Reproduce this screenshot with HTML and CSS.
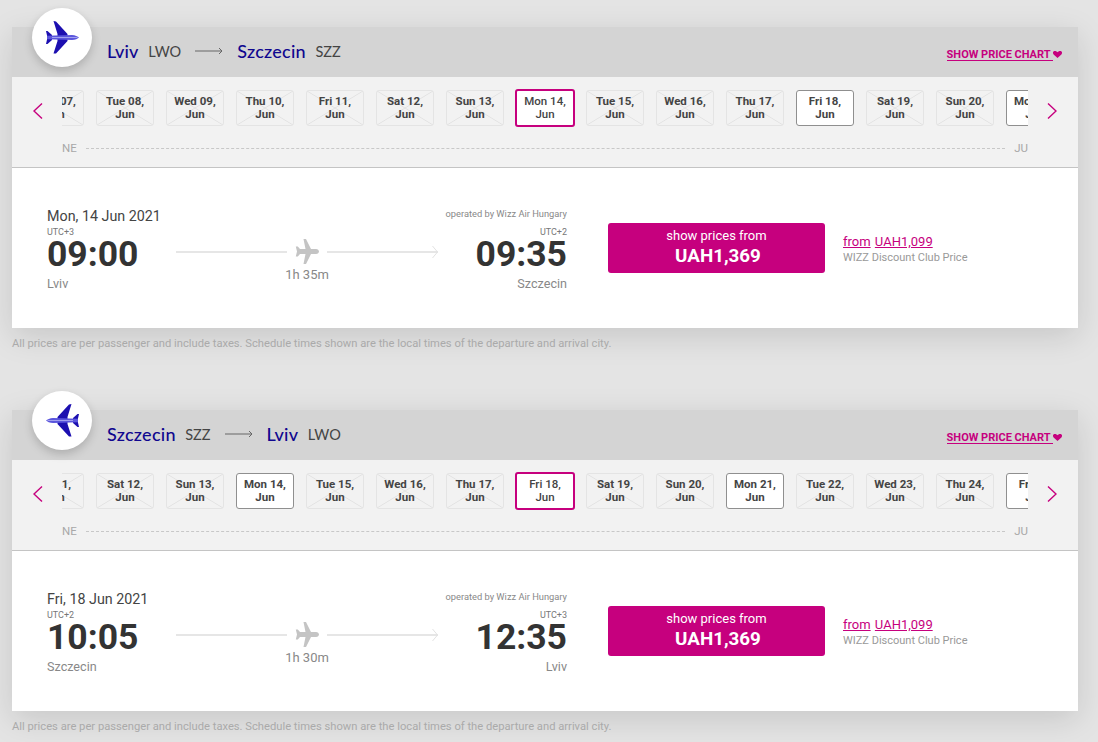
FILE: index.html
```html
<!DOCTYPE html>
<html lang="en">
<head>
<meta charset="utf-8">
<title>Flight selection</title>
<link rel="stylesheet" href="styles.css">
</head>
<body>
<svg class="defs" width="0" height="0" aria-hidden="true">
  <symbol id="jet" viewBox="0 0 33 33">
    <path fill="#1c0fb0" d="M7.500 0 10 .5 21.500 13V20L10 32.500H7.500L11.500 20V13Z"/>
    <path fill="#1c0fb0" d="M0 10H1.500L6 14V19L1.500 23H0L1.500 16.500Z"/>
    <path fill="#5a55dc" d="M1 14.800 26 14C29 14 32 15.500 33 16.500 32 17.500 29 19 26 19L1 18.200Z"/>
    <path fill="#a09eee" d="M6 16H31.500V17H6Z"/>
  </symbol>
  <symbol id="grey-plane" viewBox="0 0 24 25">
    <path fill="#c4c4c4" d="M8.500 0H11L16 10H21C22.800 10 24 11.400 24 12.500 24 13.600 22.800 15 21 15H16L11 25H8.500L10.500 15H5L2.800 17.500H.8L2 12.500 .8 7.500H2.800L5 10H10.500Z"/>
  </symbol>
  <symbol id="heart" viewBox="0 0 9 7">
    <path fill="#c6007e" d="M4.500 7 .6 3.400C-.6 2-.1 0 1.800 0 3 0 4 .6 4.500 1.300 5 .6 6 0 7.200 0 9.100 0 9.600 2 8.400 3.400Z"/>
  </symbol>
</svg>

<section class="flight">
  <header class="flight-head">
    <div class="logo"><svg class="jet" width="33" height="33"><use href="#jet"/></svg></div>
    <div class="route">
      <span class="city">Lviv</span><span class="code">LWO</span>
      <svg class="route-arrow" width="28" height="8" viewBox="0 0 28 8"><path d="M0 4H27M24 1l3 3-3 3" fill="none" stroke="#666" stroke-width="1"/></svg>
      <span class="city">Szczecin</span><span class="code">SZZ</span>
    </div>
    <a class="chart-link" href="#"><span class="chart-text">SHOW PRICE CHART </span><svg class="heart" width="9" height="7"><use href="#heart"/></svg></a>
  </header>
  <div class="dates">
    <svg class="chev" width="10" height="16" viewBox="0 0 10 16"><path d="M9 .5 1 8l8 7.500" fill="none" stroke="#c6007e" stroke-width="1.400"/></svg>
    <div class="date-column">
      <div class="date-clip">
        <div class="date-track">
          <a class="day off">Mon 07,<br>Jun</a><a class="day off">Tue 08,<br>Jun</a><a class="day off">Wed 09,<br>Jun</a><a class="day off">Thu 10,<br>Jun</a><a class="day off">Fri 11,<br>Jun</a><a class="day off">Sat 12,<br>Jun</a><a class="day off">Sun 13,<br>Jun</a><a class="day selected">Mon 14,<br>Jun</a><a class="day off">Tue 15,<br>Jun</a><a class="day off">Wed 16,<br>Jun</a><a class="day off">Thu 17,<br>Jun</a><a class="day open">Fri 18,<br>Jun</a><a class="day off">Sat 19,<br>Jun</a><a class="day off">Sun 20,<br>Jun</a><a class="day open">Mon 21,<br>Jun</a>
        </div>
      </div>
      <div class="months"><span>NE</span><i class="dash"></i><span>JU</span></div>
    </div>
    <svg class="chev" width="10" height="16" viewBox="0 0 10 16"><path d="M1 .5 9 8l-8 7.500" fill="none" stroke="#c6007e" stroke-width="1.400"/></svg>
  </div>
  <div class="details">
    <div class="trip">
      <div class="leg">
        <div class="trip-date">Mon, 14 Jun 2021</div>
        <div class="utc">UTC+3</div>
        <div class="time">09:00</div>
        <div class="place">Lviv</div>
      </div>
      <div class="path">
        <div class="path-line">
          <i class="rule"></i>
          <svg class="grey-plane" width="24" height="25"><use href="#grey-plane"/></svg>
          <i class="rule"></i>
          <svg class="tip" width="6" height="14" viewBox="0 0 6 14"><path d="M.5 1l5 6-5 6" fill="none" stroke="#e2e2e2"/></svg>
        </div>
        <div class="duration">1h 35m</div>
      </div>
      <div class="leg right">
        <div class="operator">operated by Wizz Air Hungary</div>
        <div class="utc">UTC+2</div>
        <div class="time">09:35</div>
        <div class="place">Szczecin</div>
      </div>
    </div>
    <a class="price-btn" href="#"><span class="btn-top">show prices from</span><span class="btn-price">UAH1,369</span></a>
    <div class="club">
      <div class="club-links"><a href="#">from</a> <a href="#">UAH1,099</a></div>
      <div class="club-note">WIZZ Discount Club Price</div>
    </div>
  </div>
</section>
<p class="note">All prices are per passenger and include taxes. Schedule times shown are the local times of the departure and arrival city.</p>

<section class="flight">
  <header class="flight-head">
    <div class="logo"><svg class="jet flip" width="33" height="33"><use href="#jet"/></svg></div>
    <div class="route">
      <span class="city">Szczecin</span><span class="code">SZZ</span>
      <svg class="route-arrow" width="28" height="8" viewBox="0 0 28 8"><path d="M0 4H27M24 1l3 3-3 3" fill="none" stroke="#666" stroke-width="1"/></svg>
      <span class="city">Lviv</span><span class="code">LWO</span>
    </div>
    <a class="chart-link" href="#"><span class="chart-text">SHOW PRICE CHART </span><svg class="heart" width="9" height="7"><use href="#heart"/></svg></a>
  </header>
  <div class="dates">
    <svg class="chev" width="10" height="16" viewBox="0 0 10 16"><path d="M9 .5 1 8l8 7.500" fill="none" stroke="#c6007e" stroke-width="1.400"/></svg>
    <div class="date-column">
      <div class="date-clip">
        <div class="date-track">
          <a class="day off">Fri 11,<br>Jun</a><a class="day off">Sat 12,<br>Jun</a><a class="day off">Sun 13,<br>Jun</a><a class="day open">Mon 14,<br>Jun</a><a class="day off">Tue 15,<br>Jun</a><a class="day off">Wed 16,<br>Jun</a><a class="day off">Thu 17,<br>Jun</a><a class="day selected">Fri 18,<br>Jun</a><a class="day off">Sat 19,<br>Jun</a><a class="day off">Sun 20,<br>Jun</a><a class="day open">Mon 21,<br>Jun</a><a class="day off">Tue 22,<br>Jun</a><a class="day off">Wed 23,<br>Jun</a><a class="day off">Thu 24,<br>Jun</a><a class="day open">Fri 25,<br>Jun</a>
        </div>
      </div>
      <div class="months"><span>NE</span><i class="dash"></i><span>JU</span></div>
    </div>
    <svg class="chev" width="10" height="16" viewBox="0 0 10 16"><path d="M1 .5 9 8l-8 7.500" fill="none" stroke="#c6007e" stroke-width="1.400"/></svg>
  </div>
  <div class="details">
    <div class="trip">
      <div class="leg">
        <div class="trip-date">Fri, 18 Jun 2021</div>
        <div class="utc">UTC+2</div>
        <div class="time">10:05</div>
        <div class="place">Szczecin</div>
      </div>
      <div class="path">
        <div class="path-line">
          <i class="rule"></i>
          <svg class="grey-plane" width="24" height="25"><use href="#grey-plane"/></svg>
          <i class="rule"></i>
          <svg class="tip" width="6" height="14" viewBox="0 0 6 14"><path d="M.5 1l5 6-5 6" fill="none" stroke="#e2e2e2"/></svg>
        </div>
        <div class="duration">1h 30m</div>
      </div>
      <div class="leg right">
        <div class="operator">operated by Wizz Air Hungary</div>
        <div class="utc">UTC+3</div>
        <div class="time">12:35</div>
        <div class="place">Lviv</div>
      </div>
    </div>
    <a class="price-btn" href="#"><span class="btn-top">show prices from</span><span class="btn-price">UAH1,369</span></a>
    <div class="club">
      <div class="club-links"><a href="#">from</a> <a href="#">UAH1,099</a></div>
      <div class="club-note">WIZZ Discount Club Price</div>
    </div>
  </div>
</section>
<p class="note">All prices are per passenger and include taxes. Schedule times shown are the local times of the departure and arrival city.</p>
</body>
</html>
```
FILE: styles.css
```css
* { box-sizing: border-box; }
html, body { height: 100%; }
body {
  margin: 0;
  padding: 27px 20px 0 12px;
  background: #e4e4e4;
  font-family: Roboto, "Noto Sans", sans-serif;
  color: #333;
}
.defs { position: absolute; }
.flight { box-shadow: 0 8px 30px rgba(0, 0, 0, .13); }
.note + .flight { margin-top: 59px; }

.flight-head {
  position: relative;
  display: flex;
  align-items: center;
  justify-content: space-between;
  height: 50px;
  padding: 0 16px 0 95px;
  background: #d4d4d4;
}
.logo {
  position: absolute;
  left: 20px;
  top: -19px;
  width: 60px;
  height: 59px;
  display: flex;
  align-items: center;
  justify-content: center;
  border-radius: 50%;
  background: #fff;
  box-shadow: 0 4px 10px rgba(0, 0, 0, .18);
}
.jet { margin-top: -1px; }
.flip { transform: scaleX(-1); }
.route { display: flex; align-items: center; margin-top: -2px; }
.city { font-family: Lato, sans-serif; font-size: 18px; font-weight: 500; letter-spacing: .25px; color: #10078f; margin-right: 9.500px; }
.code { font-family: Lato, sans-serif; font-size: 14.500px; color: #444; }
.route-arrow { margin: 0 14px; }
.chart-link { display: flex; align-items: center; margin-top: 5px; color: #c6007e; text-decoration: none; font-size: 11px; font-weight: 700; }
.chart-text { border-bottom: 1px solid #c6007e; line-height: 11px; white-space: pre; }
.heart { flex: none; margin-top: -1px; }

.dates {
  display: flex;
  align-items: flex-start;
  height: 91px;
  padding: 13px 21px 0 21px;
  background: #f2f2f2;
  border-bottom: 1px solid #c4c4c4;
}
.chev { flex: none; margin-top: 13px; }
.date-column { width: 966px; margin: 0 19px 0 19px; }
.date-clip { overflow: hidden; padding-top: 1px; margin-top: -1px; }
.date-track { display: flex; gap: 12px; margin-left: -36px; }
.day {
  flex: none;
  width: 58px;
  height: 36px;
  display: block;
  padding-top: 4px;
  border-radius: 3px;
  text-align: center;
  font-size: 11.500px;
  line-height: 13px;
  font-weight: 700;
  color: #444;
}
.off {
  border: 1px solid #e4e4e4;
  background:
    linear-gradient(to top right, transparent calc(50% - .8px), #e2e2e2 50%, transparent calc(50% + .8px)),
    linear-gradient(to bottom right, transparent calc(50% - .8px), #e2e2e2 50%, transparent calc(50% + .8px));
}
.open { border: 1px solid #8f8f8f; background: #fff; }
.selected { border: 2px solid #c6007e; background: #fff; height: 38px; margin: -1px -1px 0; padding-top: 4px; width: 60px; font-weight: 500; }
.months {
  display: flex;
  align-items: center;
  justify-content: space-between;
  margin-top: 14px;
  font-size: 11.500px;
  line-height: 14px;
  color: #a8a8a8;
}
.dash { flex: 1; border-top: 1px dashed #c8c8c8; margin: 0 9px 0 9px; }

.details {
  display: flex;
  align-items: flex-start;
  height: 160px;
  padding: 39px 0 0 35px;
  background: #fff;
}
.trip { display: flex; width: 520px; flex: none; }
.leg { width: 129px; flex: none; }
.leg.right { text-align: right; }
.trip-date { font-size: 14.300px; line-height: 18px; color: #444; white-space: nowrap; }
.operator { font-size: 9.300px; line-height: 14px; color: #888; white-space: nowrap; margin-left: -20px; height: 14px; }
.right .utc { margin-top: 6px; }
.utc { font-size: 9px; line-height: 10px; color: #777; margin-top: 2px; }
.time { font-size: 35.500px; line-height: 38px; font-weight: 700; color: #333; margin-top: -2px; }
.place { font-size: 12.600px; line-height: 18px; color: #888; margin-top: 2px; }
.path { flex: 1; padding-top: 32px; }
.path-line { display: flex; align-items: center; }
.rule { flex: 1; height: 2px; background: #e6e6e6; }
.grey-plane { margin: 0 8px; }
.tip { margin-left: -6px; }
.duration { text-align: center; font-size: 13px; line-height: 18px; color: #888; margin-top: 2px; }

.price-btn {
  flex: none;
  width: 217px;
  height: 50px;
  margin: 16px 0 0 41px;
  border-radius: 3px;
  background: #c6007e;
  color: #fff;
  text-decoration: none;
  display: flex;
  flex-direction: column;
  align-items: center;
  justify-content: center;
}
.btn-top { font-size: 13px; line-height: 16px; }
.btn-price { font-size: 18.800px; line-height: 24px; font-weight: 700; padding-left: 3px; }
.club { margin: 26px 0 0 18px; }
.club-links { font-size: 13px; line-height: 17px; color: #c6007e; }
.club-links a { color: inherit; margin-right: 1px; }
.club-note { font-size: 11px; line-height: 15px; color: #999; }

.note { margin: 8px 0 0; font-size: 11.200px; line-height: 15px; color: #aaa; white-space: nowrap; }
```
